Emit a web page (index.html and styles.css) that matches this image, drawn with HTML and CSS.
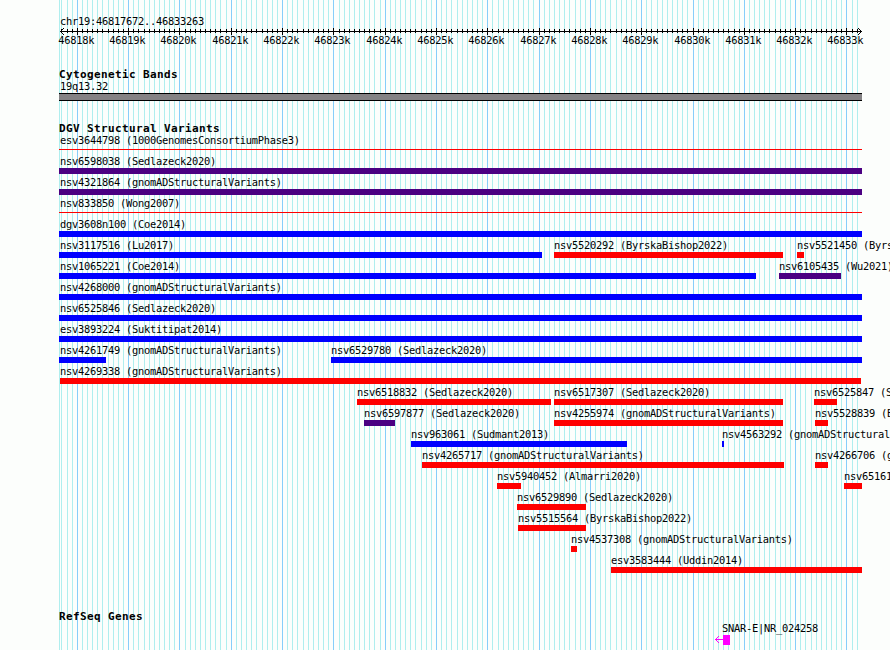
FILE: index.html
```html
<!DOCTYPE html>
<html lang="en">
<head>
  <meta charset="UTF-8">
  <title>chr19:46817672..46833263</title>
  <link rel="stylesheet" href="styles.css">
</head>
<body>

<div class="browser">
  <svg class="gridlines" id="gridlines" width="890" height="650"></svg>

  <div class="region">chr19:46817672..46833263</div>
  <svg class="ruler" id="ruler" width="890" height="22"></svg>

  <div class="track cytobands">
    <h2>Cytogenetic Bands</h2>
    <div class="label">19q13.32</div>
    <div class="band"></div>
  </div>

  <div class="track variants">
    <h2>DGV Structural Variants</h2>
    <div id="variantRows"></div>
  </div>

  <div class="track genes">
    <h2>RefSeq Genes</h2>
    <div class="gene">
      <div class="label">SNAR-E|NR_024258</div>
      <svg width="15" height="10" shape-rendering="crispEdges">
        <path d="M0 4h8v1H0zM1 3h1v1H1zM2 2h1v1H2zM3 1h1v1H3zM1 5h1v1H1zM2 6h1v1H2zM3 7h1v1H3z" fill="#ff00ff"/>
        <rect x="8" y="0" width="7" height="10" fill="#ff00ff"/>
      </svg>
    </div>
  </div>
</div>

<script src="script.js"></script>
</body>
</html>
```
FILE: styles.css
```css
* {
  box-sizing: border-box;
}
body {
  margin: 0;
  background-color: #fcfefc;
  color: #000;
  font-family: "DejaVu Sans Mono", monospace;
  font-size: 10.4px;
  letter-spacing: -0.26px;
  line-height: 13px;
  overflow: hidden;
}
.browser {
  position: relative;
  width: 890px;
  height: 650px;
  overflow: hidden;
}
.gridlines {
  position: absolute;
  left: 0;
  top: 0;
  z-index: -1;
}
.region {
  padding: 15px 0 0 60px;
  height: 27px;
}
.ruler {
  display: block;
}
.track {
  padding-left: 59px;
}
.track h2 {
  margin: 0;
  height: 13px;
  line-height: 13px;
  font-size: 11px;
  font-weight: bold;
  letter-spacing: 0.38px;
}
.label {
  height: 13px;
  white-space: pre;
}
.cytobands {
  padding-top: 19px;
}
.cytobands h2 {
  height: 12px;
}
.cytobands .label {
  padding-left: 1px;
}
.band {
  width: 803px;
  height: 8px;
  background-color: #848284;
  border-top: 1px solid #000;
  border-bottom: 1px solid #000;
}
.variants {
  padding-top: 21px;
}
.variants h2 {
  height: 12px;
}
.row {
  display: flex;
  height: 21px;
}
.feature {
  flex: none;
}
.clipped .label {
  text-indent: 1px;
}
.bar {
  height: 6px;
}
.red {
  background-color: #ff0000;
}
.blue {
  background-color: #0000ff;
}
.indigo {
  background-color: #4b0082;
}
.thin {
  height: 1px;
  margin-top: 2px;
}
.genes {
  padding-top: 35px;
}
.genes h2 {
  height: 12px;
}
.gene {
  padding-left: 656px;
}
.gene .label {
  padding-left: 7px;
}
.gene svg {
  display: block;
}
```
FILE: script.js
```js
const regionStart = 46817672;
const regionEnd = 46833263;
const left = 60;
const scale = 800 / (regionEnd - regionStart + 1);

// [name, start x, end x, colour, thin]
const rows = [
  [["esv3644798 (1000GenomesConsortiumPhase3)", 59, 862, "red", true]],
  [["nsv6598038 (Sedlazeck2020)", 59, 862, "indigo"]],
  [["nsv4321864 (gnomADStructuralVariants)", 59, 862, "indigo"]],
  [["nsv833850 (Wong2007)", 59, 862, "red", true]],
  [["dgv3608n100 (Coe2014)", 59, 862, "blue"]],
  [["nsv3117516 (Lu2017)", 59, 542, "blue"], ["nsv5520292 (ByrskaBishop2022)", 554, 783, "red"], ["nsv5521450 (ByrskaBishop2022)", 797, 804, "red"]],
  [["nsv1065221 (Coe2014)", 59, 756, "blue"], ["nsv6105435 (Wu2021)", 779, 841, "indigo"]],
  [["nsv4268000 (gnomADStructuralVariants)", 59, 862, "blue"]],
  [["nsv6525846 (Sedlazeck2020)", 59, 862, "blue"]],
  [["esv3893224 (Suktitipat2014)", 59, 862, "blue"]],
  [["nsv4261749 (gnomADStructuralVariants)", 59, 106, "blue"], ["nsv6529780 (Sedlazeck2020)", 331, 862, "blue"]],
  [["nsv4269338 (gnomADStructuralVariants)", 60, 861, "red"]],
  [["nsv6518832 (Sedlazeck2020)", 357, 551, "red"], ["nsv6517307 (Sedlazeck2020)", 554, 783, "red"], ["nsv6525847 (Sedlazeck2020)", 814, 837, "red"]],
  [["nsv6597877 (Sedlazeck2020)", 364, 395, "indigo"], ["nsv4255974 (gnomADStructuralVariants)", 554, 783, "red"], ["nsv5528839 (ByrskaBishop2022)", 815, 828, "red"]],
  [["nsv963061 (Sudmant2013)", 411, 627, "blue"], ["nsv4563292 (gnomADStructuralVariants)", 722, 724, "blue"]],
  [["nsv4265717 (gnomADStructuralVariants)", 422, 784, "red"], ["nsv4266706 (gnomADStructuralVariants)", 815, 828, "red"]],
  [["nsv5940452 (Almarri2020)", 497, 521, "red"], ["nsv65161", 844, 862, "red"]],
  [["nsv6529890 (Sedlazeck2020)", 517, 586, "red"]],
  [["nsv5515564 (ByrskaBishop2022)", 518, 586, "red"]],
  [["nsv4537308 (gnomADStructuralVariants)", 571, 577, "red"]],
  [["esv3583444 (Uddin2014)", 611, 862, "red"]]
];

function rect(x, y, width, height, fill) {
  return `<rect x="${x}" y="${y}" width="${width}" height="${height}" fill="${fill}"/>`;
}

function drawScale() {
  let grid = rect(59, 0, 1, 650, "#afeeee");
  let ruler = rect(60, 4, 802, 1, "#000");
  for (let pos = Math.ceil(regionStart / 100) * 100; pos < regionEnd; pos += 100) {
    const x = Math.round(left + (pos - regionStart) * scale);
    const major = pos % 1000 === 0;
    grid += rect(x, 0, 1, 650, major ? "#87cefa" : "#afeeee");
    ruler += major ? rect(x, 1, 1, 7, "#000") : rect(x, 2, 1, 4, "#000");
    if (major) {
      ruler += `<text x="${x - 18.7}" y="17">${pos / 1000}k</text>`;
    }
  }
  // arrow heads
  for (let i = 1; i <= 3; i++) {
    ruler += rect(60 + i, 4 - i, 1, 1, "#000") + rect(60 + i, 4 + i, 1, 1, "#000");
    ruler += rect(861 - i, 4 - i, 1, 1, "#000") + rect(861 - i, 4 + i, 1, 1, "#000");
  }
  document.getElementById("gridlines").innerHTML = grid;
  document.getElementById("ruler").innerHTML = ruler;
}

function drawVariants() {
  let html = "";
  rows.forEach(row => {
    let x = 59;
    html += '<div class="row">';
    row.forEach(([name, start, end, color, thin]) => {
      html += `<div class="feature${start < 60 ? " clipped" : ""}" style="margin-left: ${start - x}px; width: ${end - start}px">
        <div class="label">${name}</div>
        <div class="bar ${color}${thin ? " thin" : ""}"></div>
      </div>`;
      x = end;
    });
    html += "</div>";
  });
  document.getElementById("variantRows").innerHTML = html;
}

drawScale();
drawVariants();
```
